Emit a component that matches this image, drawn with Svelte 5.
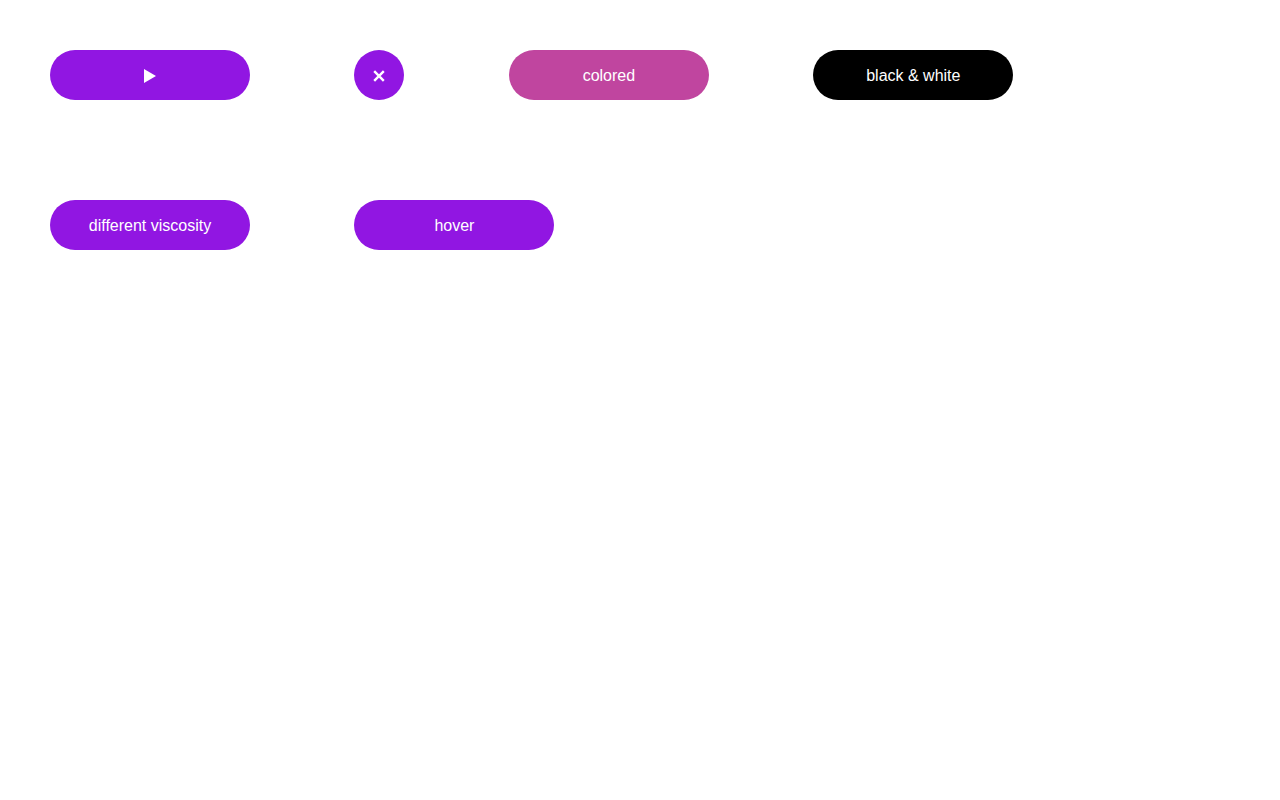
<script>
	const textButtons = {
		colored: 'colored',
		blackWhite: 'black & white'
	}
</script>

<div class="buttons">
	<button class="btn" aria-label="play">
		<svg width="12" height="14" viewBox="0 0 12 14"><path d="M0 0 L12 7 L0 14 Z" fill="#fff" /></svg>
	</button>
	<button class="btn round" aria-label="close">
		<svg width="12" height="12" viewBox="0 0 12 12"><path d="M1.2 1.2 L10.8 10.8 M10.8 1.2 L1.2 10.8" stroke="#fff" stroke-width="2.4" fill="none" /></svg>
	</button>
	<button class="btn colored">{textButtons.colored}</button>
	<button class="btn bw">{textButtons.blackWhite}</button>
	<button class="btn">different viscosity</button>
	<button class="btn">hover</button>
</div>

<style>
	:global(body) {
		margin: 0;
		background: #fff;
	}

	.buttons {
		display: flex;
		flex-wrap: wrap;
		column-gap: 4.45px;
	}

	.btn {
		display: flex;
		justify-content: center;
		align-items: center;
		width: 200px;
		height: 50px;
		margin: 50px;
		padding: 1px 0 0;
		border: 0;
		border-radius: 25px;
		background: #9116e2;
		color: #fff;
		font-family: "Liberation Sans", Arial, sans-serif;
		font-size: 16px;
		cursor: pointer;
	}

	.round {
		width: 50px;
	}

	.colored {
		background: #c0459f;
	}

	.bw {
		background: #000;
	}
</style>
